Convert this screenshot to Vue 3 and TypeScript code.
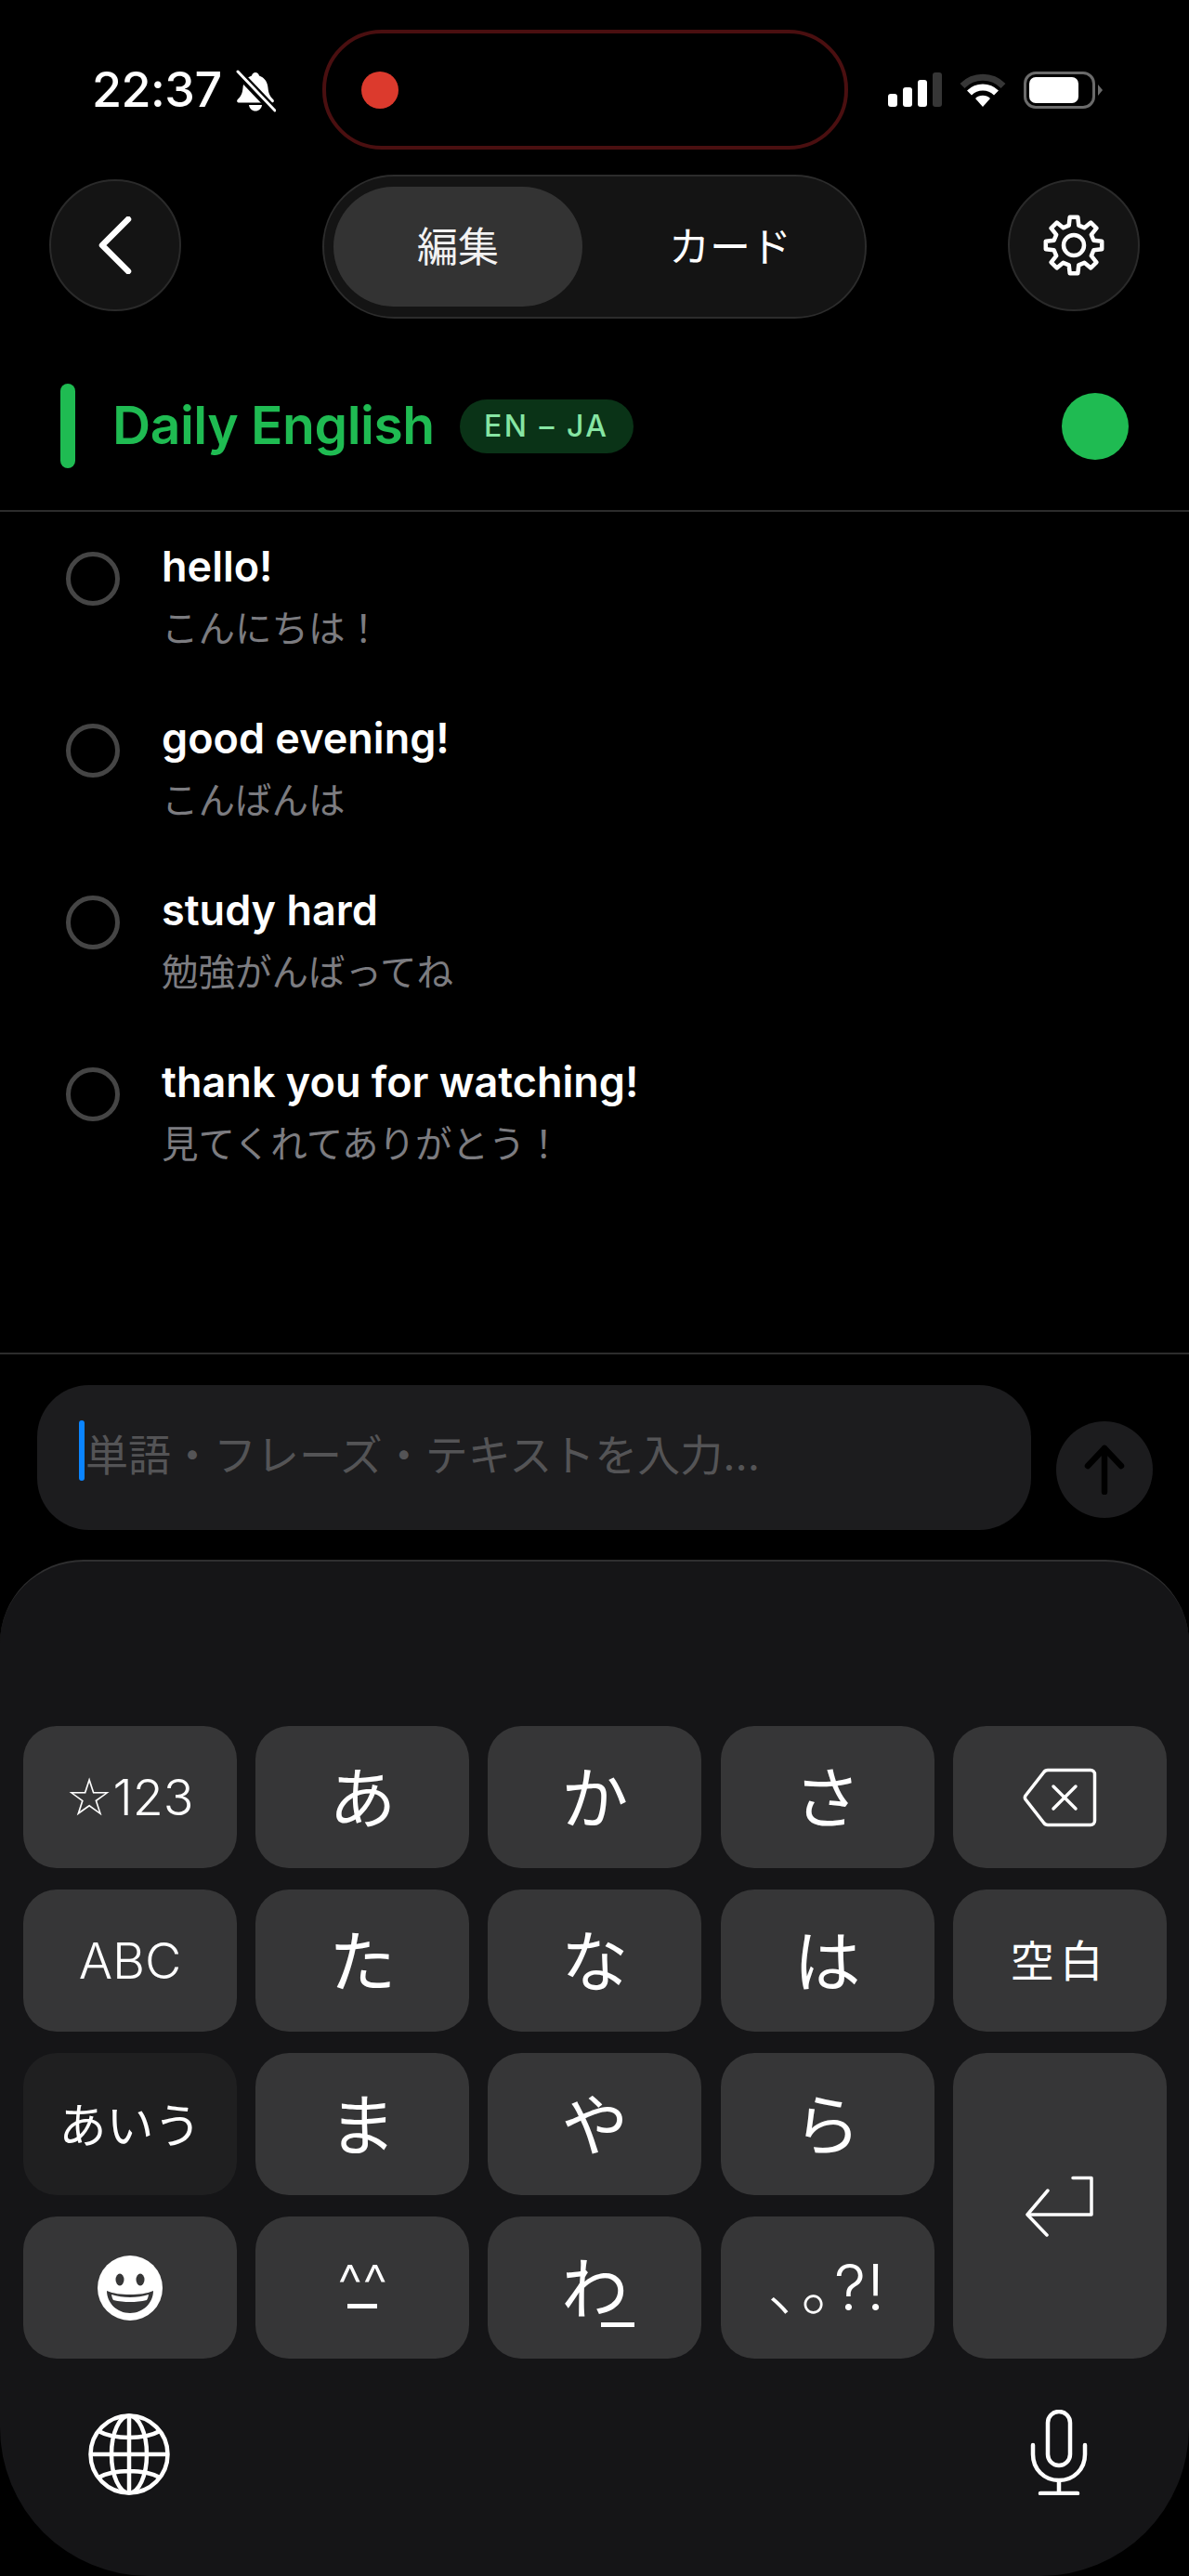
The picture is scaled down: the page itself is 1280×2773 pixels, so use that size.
<script setup lang="ts">
const rows = [
  { word: 'hello!', meaning: 'こんにちは！' },
  { word: 'good evening!', meaning: 'こんばんは' },
  { word: 'study hard', meaning: '勉強がんばってね' },
  { word: 'thank you for watching!', meaning: '見てくれてありがとう！' },
]

// 歯車のアウトラインを計算で作る（歯は8枚）
const gearPath = (() => {
  const pts: string[] = []
  const teeth = 8
  for (let i = 0; i < teeth; i++) {
    const a = (i * Math.PI * 2) / teeth - Math.PI / 2
    const step = Math.PI / teeth
    const at = (r: number, t: number) =>
      `${(33 + r * Math.cos(t)).toFixed(2)} ${(33 + r * Math.sin(t)).toFixed(2)}`
    pts.push(at(22, a - step * 0.62), at(30.5, a - step * 0.36), at(30.5, a + step * 0.36), at(22, a + step * 0.62))
  }
  return 'M' + pts.join('L') + 'Z'
})()

const kanaKeys1 = ['あ', 'か', 'さ']
const kanaKeys2 = ['た', 'な', 'は']
const kanaKeys3 = ['ま', 'や', 'ら']
</script>

<template>
  <div class="page">
    <div class="status-bar">
      <div class="status-left">
        <span class="time">22:37</span>
        <svg class="bell" viewBox="0 0 44 46" width="44" height="46">
          <path d="M22 3c2 0 3.500 1.500 4 3.500 6 2 9 7 9.500 13 .5 6 2 9 6 13 1 1.500 0 3-1.500 3H4c-1.500 0-2.500-1.500-1.500-3 4-4 5.500-7 6-13 .5-6 3.500-11 9.500-13C18.500 4.500 20 3 22 3z" fill="#fff" />
          <path d="M15 38h14c-.5 4-3.500 6.500-7 6.500S15.500 42 15 38z" fill="#fff" />
          <path d="M2 2 42 44" stroke="#000" stroke-width="9" />
          <path d="M3 2 43 44" stroke="#fff" stroke-width="3" stroke-linecap="round" />
        </svg>
      </div>
      <div class="island">
        <span class="rec-dot"></span>
      </div>
      <div class="status-right">
        <div class="signal">
          <span class="sig s1"></span>
          <span class="sig s2"></span>
          <span class="sig s3"></span>
          <span class="sig s4"></span>
        </div>
        <svg class="wifi" viewBox="0 0 52 40" width="52" height="40">
          <path d="M4 15.500a31 31 0 0 1 44 0" fill="none" stroke="#363636" stroke-width="7" />
          <path d="M11.500 23a20.500 20.500 0 0 1 29 0" fill="none" stroke="#fff" stroke-width="7" />
          <path d="M18 29a11.500 11.500 0 0 1 16 0l-8 9z" fill="#fff" />
        </svg>
        <div class="battery">
          <div class="battery-body"><span class="battery-fill"></span></div>
          <span class="battery-tip"></span>
        </div>
      </div>
    </div>

    <div class="toolbar">
      <button class="round-btn">
        <svg viewBox="0 0 36 62" width="36" height="62">
          <path d="M32 3 4 31l28 28" fill="none" stroke="#fff" stroke-width="6.500" stroke-linecap="round" stroke-linejoin="round" />
        </svg>
      </button>
      <div class="segment">
        <div class="tab active">編集</div>
        <div class="tab second">カード</div>
      </div>
      <button class="round-btn">
        <svg viewBox="0 0 66 66" width="66" height="66">
          <path :d="gearPath" fill="none" stroke="#fff" stroke-width="4.500" stroke-linejoin="round" />
          <circle cx="33" cy="33" r="11" fill="none" stroke="#fff" stroke-width="4.500" />
        </svg>
      </button>
    </div>

    <div class="deck-head">
      <span class="deck-bar"></span>
      <span class="deck-title">Daily English</span>
      <span class="deck-badge">EN – JA</span>
      <span class="deck-dot"></span>
    </div>

    <ul class="list">
      <li v-for="row in rows" :key="row.word" class="row">
        <span class="check"></span>
        <div class="row-text">
          <div class="word">{{ row.word }}</div>
          <div class="meaning">{{ row.meaning }}</div>
        </div>
      </li>
    </ul>

    <div class="composer">
      <div class="input">
        <span class="caret"></span>
        <span class="placeholder">単語・フレーズ・テキストを入力...</span>
      </div>
      <button class="send">
        <svg viewBox="0 0 44 54" width="44" height="54">
          <path d="M22 51V4M4 23 22 4l18 19" fill="none" stroke="#000" stroke-width="6.500" stroke-linecap="round" stroke-linejoin="round" />
        </svg>
      </button>
    </div>

    <div class="keyboard">
      <div class="keys">
        <div class="key small star"><span class="star-glyph">☆</span>123</div>
        <div v-for="k in kanaKeys1" :key="k" class="key kana">{{ k }}</div>
        <div class="key">
          <svg viewBox="0 0 80 64" width="80" height="64">
            <path d="M27 2.500h46c2.500 0 4.500 2 4.500 4.500v50c0 2.500-2 4.500-4.500 4.500H27c-2 0-3.500-1-4.500-2.500L3 34c-1-1.500-1-2.500 0-4L22.500 5c1-1.500 2.500-2.500 4.500-2.500z" fill="none" stroke="#fff" stroke-width="3.500" />
            <path d="M33 20 57 44M57 20 33 44" fill="none" stroke="#fff" stroke-width="3.500" stroke-linecap="round" />
          </svg>
        </div>

        <div class="key small">ABC</div>
        <div v-for="k in kanaKeys2" :key="k" class="key kana">{{ k }}</div>
        <div class="key space-key">空白</div>

        <div class="key mode">あいう</div>
        <div v-for="k in kanaKeys3" :key="k" class="key kana">{{ k }}</div>
        <div class="key enter">
          <svg viewBox="0 0 76 66" width="76" height="66">
            <path d="M52 2.500h20v39.500H4" fill="none" stroke="#fff" stroke-width="3.500" stroke-linejoin="round" stroke-linecap="round" />
            <path d="M25 16 3 42l21 22" fill="none" stroke="#fff" stroke-width="3.500" stroke-linejoin="round" stroke-linecap="round" />
          </svg>
        </div>

        <div class="key">
          <svg viewBox="0 0 70 70" width="70" height="70">
            <circle cx="35" cy="35" r="35" fill="#fff" />
            <ellipse cx="24" cy="26" rx="4.500" ry="6.500" fill="#363637" />
            <ellipse cx="46" cy="26" rx="4.500" ry="6.500" fill="#363637" />
            <path d="M10 38c7 3 15 4 25 4s18-1 25-4c0 13-11 24-25 24S10 51 10 38z" fill="#363637" />
            <path d="M15 42c6 2 13 3 20 3s14-1 20-3c-.5 3-1 4-2 6-6 1.500-12 2-18 2s-12-.5-18-2c-1-2-1.500-3-2-6z" fill="#fff" />
          </svg>
        </div>
        <div class="key face"><span class="face-eyes">^^</span><span class="face-mouth"></span></div>
        <div class="key kana wa"><span>わ</span><span class="wa-bar"></span></div>
        <div class="key punct">､｡?!</div>
      </div>

      <div class="kb-bottom">
        <svg viewBox="0 0 88 88" width="88" height="88">
          <g fill="none" stroke="#fff" stroke-width="4.500">
            <circle cx="44" cy="44" r="41.500" />
            <ellipse cx="44" cy="44" rx="19" ry="41.500" />
            <path d="M44 2.500v83M2.500 44h83M11 19c9 5 20 7 33 7s24-2 33-7M11 69c9-5 20-7 33-7s24 2 33 7" />
          </g>
        </svg>
        <svg viewBox="0 0 62 92" width="62" height="92">
          <g fill="none" stroke="#fff" stroke-width="4.500" stroke-linecap="round">
            <rect x="19" y="2" width="24" height="58" rx="12" />
            <path d="M3 38v10c0 16 12 28 28 28s28-12 28-28V38M31 76v13M11 90h40" />
          </g>
        </svg>
      </div>
    </div>
  </div>
</template>

<style>
html,
body {
  margin: 0;
  background: #000;
}
</style>

<style scoped>
.page {
  width: 1280px;
  height: 2773px;
  background: #000;
  color: #fff;
  display: flex;
  flex-direction: column;
  overflow: hidden;
  font-family: Inter, "Noto Sans CJK JP", sans-serif;
}

.status-bar {
  display: flex;
  padding-top: 32px;
  padding-left: 99px;
  height: 129px;
  flex: none;
}

.status-left {
  width: 248px;
  display: flex;
  align-items: center;
  gap: 14px;
  height: 129px;
}

.time {
  font-size: 52px;
  font-weight: 500;
  letter-spacing: -0.5px;
  line-height: 1;
}

.bell {
  margin-top: 2px;
}

.island {
  width: 566px;
  height: 129px;
  box-sizing: border-box;
  border: 4px solid #4a0f10;
  border-radius: 64px;
  display: flex;
  align-items: center;
  padding-left: 38px;
}

.rec-dot {
  width: 40px;
  height: 40px;
  border-radius: 50%;
  background: #dc3a2d;
}

.status-right {
  display: flex;
  align-items: center;
  height: 129px;
  margin-left: 43px;
  gap: 18px;
}

.signal {
  display: flex;
  align-items: flex-end;
  gap: 6px;
  height: 37px;
}

.sig {
  width: 10px;
  border-radius: 3px;
  background: #fff;
}

.s1 { height: 14px; }
.s2 { height: 21px; }
.s3 { height: 29px; }
.s4 { height: 37px; background: #363636; }

.battery {
  display: flex;
  align-items: center;
  gap: 3px;
}

.battery-body {
  width: 77px;
  height: 40px;
  box-sizing: border-box;
  border: 3px solid #6b6b6b;
  border-radius: 13px;
  padding: 3px;
}

.battery-fill {
  display: block;
  width: 53px;
  height: 100%;
  background: #fff;
  border-radius: 7px;
}

.battery-tip {
  width: 0;
  height: 0;
  border-left: 5px solid #6b6b6b;
  border-top: 6px solid transparent;
  border-bottom: 6px solid transparent;
}

.toolbar {
  display: flex;
  justify-content: space-between;
  align-items: center;
  margin-top: 27px;
  padding: 0 53px;
  flex: none;
}

.round-btn {
  width: 142px;
  height: 142px;
  margin-top: -3px;
  border-radius: 50%;
  border: 2px solid #2a2a2a;
  background: #141414;
  padding: 0;
  display: flex;
  align-items: center;
  justify-content: center;
}

.segment {
  width: 586px;
  height: 155px;
  box-sizing: border-box;
  padding: 11px 12px 11px 10px;
  border: 2px solid #2c2c2c;
  border-radius: 78px;
  background: #141414;
  display: flex;
}

.tab {
  font-size: 44px;
  color: #fff;
  display: flex;
  align-items: center;
  justify-content: center;
  padding-bottom: 5px;
  box-sizing: border-box;
}

.tab.active {
  width: 268px;
  background: #333;
  border-radius: 65px;
  color: #f2f2f2;
}

.tab.second {
  flex: 1;
  padding-left: 26px;
}

.deck-head {
  display: flex;
  align-items: center;
  margin-top: 70px;
  padding: 0 65px 45px;
  border-bottom: 2px solid #2c2c2c;
  flex: none;
}

.deck-bar {
  width: 16px;
  height: 91px;
  border-radius: 8px;
  background: #1fbb52;
}

.deck-title {
  margin-left: 40px;
  font-size: 57px;
  font-weight: 600;
  letter-spacing: -0.5px;
  color: #1fbb52;
  margin-top: -2px;
}

.deck-badge {
  margin-left: 27px;
  height: 58px;
  width: 187px;
  border-radius: 29px;
  background: #0a3317;
  color: #86e5a3;
  font-size: 32px;
  font-weight: 500;
  letter-spacing: 2.500px;
  display: flex;
  align-items: center;
  justify-content: center;
}

.deck-dot {
  margin-left: auto;
  width: 72px;
  height: 72px;
  border-radius: 50%;
  background: #1fbb52;
}

.list {
  list-style: none;
  margin: 0;
  padding: 25px 0 0 71px;
  flex: 1;
}

.row {
  display: flex;
  height: 185px;
}

.check {
  flex: none;
  width: 58px;
  height: 58px;
  box-sizing: border-box;
  border: 5px solid #454545;
  border-radius: 50%;
  margin-top: 18px;
}

.row-text {
  margin-left: 45px;
  padding-top: 4px;
}

.word {
  font-size: 45px;
  line-height: 60px;
  font-weight: 600;
}

.meaning {
  margin-top: 9px;
  font-size: 39.500px;
  line-height: 56px;
  color: #7c7c80;
}

.composer {
  flex: none;
  height: 223px;
  box-sizing: border-box;
  border-top: 2px solid #2c2c2c;
  padding: 33px 39px 0 40px;
  display: flex;
  align-items: flex-start;
  justify-content: space-between;
}

.input {
  width: 1070px;
  height: 156px;
  border-radius: 56px;
  background: #1c1c1e;
  display: flex;
  align-items: center;
  padding-left: 45px;
  box-sizing: border-box;
}

.caret {
  width: 6px;
  height: 65px;
  border-radius: 3px;
  background: #0a84ff;
  margin-top: -16px;
  flex: none;
}

.placeholder {
  font-size: 46px;
  color: #545456;
  margin-left: 1px;
  margin-top: -12px;
}

.send {
  margin-top: 39px;
  width: 104px;
  height: 104px;
  border-radius: 50%;
  border: none;
  background: #1c1c1e;
  padding: 0;
  display: flex;
  align-items: center;
  justify-content: center;
}

.keyboard {
  flex: none;
  height: 1094px;
  box-sizing: border-box;
  background: #151517;
  border-top: 2px solid #2f2f30;
  border-radius: 90px 90px 160px 160px;
  padding: 177px 24px 0 25px;
}

.keys {
  display: grid;
  grid-template-columns: repeat(5, 230px);
  grid-auto-rows: 153px;
  column-gap: 20.200px;
  row-gap: 23px;
}

.key {
  border-radius: 36px;
  background: #363637;
  display: flex;
  align-items: center;
  justify-content: center;
  font-family: "Noto Sans CJK JP", sans-serif;
  color: #fff;
}

.kana {
  font-size: 72px;
  font-weight: 400;
  line-height: 1;
  padding-bottom: 8px;
  box-sizing: border-box;
}

.small {
  font-size: 54px;
  font-family: Inter, sans-serif;
  font-weight: 300;
}

.star-glyph {
  font-family: "DejaVu Sans", sans-serif;
  font-size: 56px;
}

.space-key {
  font-size: 47px;
  font-weight: 400;
  letter-spacing: 6px;
  padding-bottom: 6px;
  box-sizing: border-box;
}

.mode {
  background: #1f1f20;
  font-size: 51px;
  font-weight: 400;
  padding-bottom: 4px;
  box-sizing: border-box;
}

.enter {
  grid-column: 5;
  grid-row: 3 / span 2;
}

.face {
  flex-direction: column;
}

.face-eyes {
  font-family: Inter, sans-serif;
  font-size: 60px;
  font-weight: 300;
  line-height: 36px;
  height: 26px;
  margin-top: 0;
}

.face-mouth {
  width: 32px;
  height: 5px;
  margin-top: 14px;
  background: #fff;
}

.wa {
  position: relative;
}

.wa-bar {
  position: absolute;
  left: 122px;
  top: 114px;
  width: 36px;
  height: 5px;
  background: #fff;
}

.punct {
  font-size: 68px;
  font-weight: 300;
  font-family: Inter, "Noto Sans CJK JP", sans-serif;
  letter-spacing: 1px;
  padding-bottom: 10px;
  box-sizing: border-box;
}

.kb-bottom {
  display: flex;
  justify-content: space-between;
  align-items: flex-end;
  margin-top: 55px;
  padding: 0 85px 0 70px;
}
</style>
